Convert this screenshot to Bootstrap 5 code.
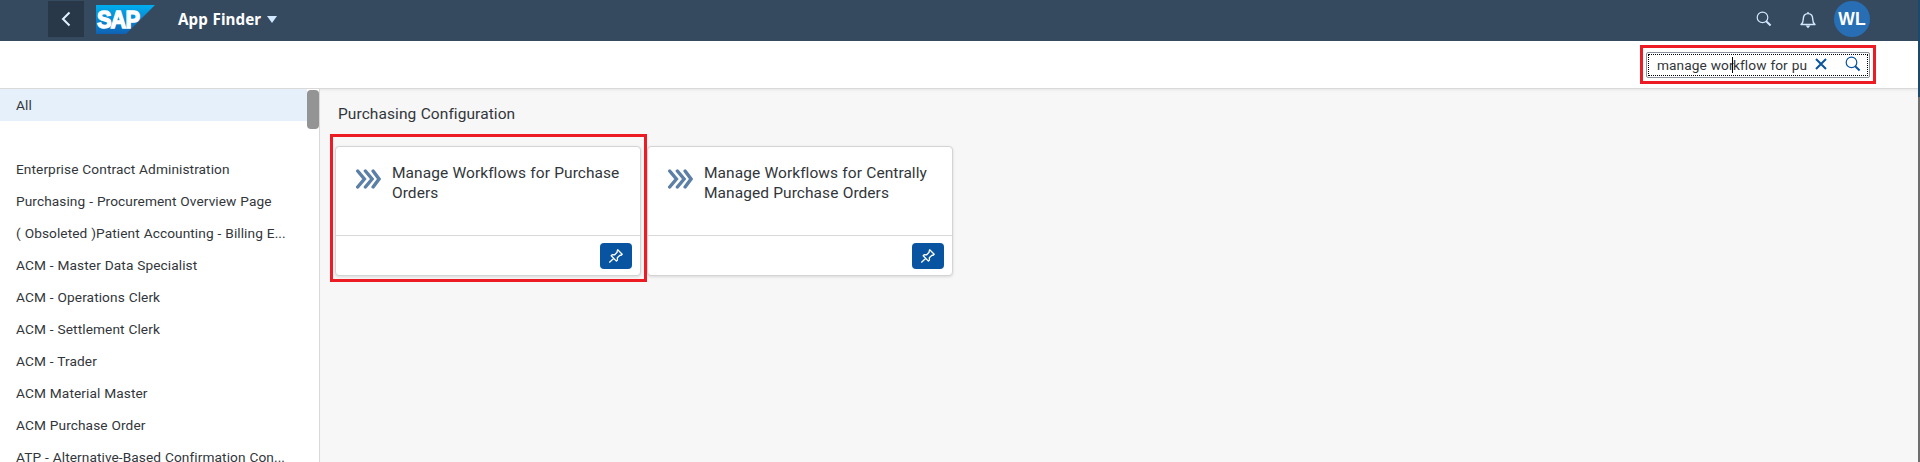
<!DOCTYPE html>
<html lang="en">
<head>
<meta charset="utf-8">
<meta name="viewport" content="width=device-width, initial-scale=1">
<title>App Finder</title>
<link href="https://cdn.jsdelivr.net/npm/bootstrap@5.3.0/dist/css/bootstrap.min.css" rel="stylesheet">
<style>
body{height:462px;font-family:Roboto,"Noto Sans",sans-serif;font-size:13.7px;letter-spacing:.08px;word-spacing:.4px;color:#32363a;background:#f7f7f7}
svg{display:block;flex:none}
.page{width:1918px}
.edge{width:2px;background:linear-gradient(#1c4a6b 0 97px,#6e6e6e 97px)}
.shell{height:41px;background:#354a5f;padding:0 48px}
.back-btn{width:36px;height:36px;margin:1px 12px 0 0;background:#283848;border:0;padding:0}
.shell-title{margin:-4px 0 0 22px;font:700 15.2px/20px "Noto Sans",sans-serif;letter-spacing:.1px;color:#fff}
.caret{border:5px solid transparent;border-top:7px solid #d1e8ff;border-bottom:0;margin:-3px 0 0 6px}
.right-tools svg{margin-top:11px}
.tool-lens{margin-right:28px;color:#d1e8ff}
.tool-bell{margin-right:18px}
.avatar{width:36px;height:36px;background:#286eb4;color:#fff;font:700 17.5px "Liberation Sans",sans-serif;margin-top:1px}
.toolbar-row{height:48px;border-bottom:1px solid #d9d9d9;padding:4px 42px 0 0}
.mark-box{border:3px solid #ed1c24}
.search-mark{width:236px;height:39px;padding:4px 3px}
.search-field{width:224px;height:26px;border:1px solid #89919a;border-radius:2px;padding:1px}
.search-inner{height:22px;border:1px dotted #000;padding-left:8px;white-space:nowrap}
.q1{width:75px}
.q2{width:72px}
.cursor{width:1px;height:16px;background:#000}
.clear-x{margin:-3px 0 0 10px}
.go{margin:-2px 0 0 18px;color:#0854a0}
.side{width:320px;border-right:1px solid #d9d9d9}
.side .list-group-item{height:32px;padding:0 16px;border:0;line-height:32px;color:#32363a;background:none;white-space:nowrap}
.side .picked{background:#e5f0fa;width:307px}
.side .spacer{height:32px}
.thumb{width:12px;height:39px;background:#949494;border-radius:4px;right:0;top:1px}
.content{box-shadow:inset 0 3px 3px -2px #e6e6e6}
.group-title{font-size:15.5px;letter-spacing:.08px;line-height:20px;padding:15px 0 0 18px}
.tiles{padding:10px 0 0 10px}
.tiles>*+*{margin-left:-5px}
.tile-wrap{padding:9px 3px 4px 2px;width:317px;height:148px;border-color:transparent}
.tile-wrap.marked{border-color:#ed1c24}
.tile{width:306px;height:130px;border:1px solid #d3d4d5;border-radius:4px;box-shadow:0 1px 3px rgba(0,0,0,.12)}
.tile-top{height:88px;padding:16px 16px 0 20px}
.tile-text{font-size:15.5px;letter-spacing:.05px;line-height:20px;margin-left:11px;white-space:nowrap}
.tile-foot{height:40px;border-top:1px solid #d9d9d9;padding:0 8px}
.pin-btn{width:32px;height:26px;background:#0854a0;border-radius:4px;padding:0;border:0}
.chev{margin-top:6px}
</style>
</head>
<body class="d-flex overflow-hidden">
<svg width="0" height="0" class="position-absolute" aria-hidden="true">
  <symbol id="chev" viewBox="0 0 25 20"><path d="M1.700 2l6.700 8-6.700 8M9.400 2l6.700 8-6.700 8M17.100 2l5.900 8-5.900 8" fill="none" stroke="#5b7fa6" stroke-width="3.400" stroke-linecap="round"/></symbol>
  <symbol id="pin" viewBox="0 0 16 16"><path d="M9.700 1.800l4.500 4.400-1.100 1.100-1.100-.1-2.700 2.500.2 2.400-1.100 1-5.200-5.300 1-1.100 2.500.1 2.400-2.600.1-1.300zM5.800 10.200L1.300 14.500" fill="none" stroke="#fff" stroke-width="1.300" stroke-linejoin="round"/></symbol>
  <symbol id="lens" viewBox="0 0 16 16"><circle cx="6.500" cy="6.400" r="5.300" fill="none" stroke="currentColor" stroke-width="1.200"/><path d="M10.200 10.300l4.400 4.200" stroke="currentColor" stroke-width="2"/></symbol>
  <linearGradient id="sapfill" x2="0" y2="1"><stop stop-color="#00aeef"/><stop offset="1" stop-color="#0f62b4"/></linearGradient>
</svg>
<div class="page d-flex flex-column flex-shrink-0">
  <header class="shell d-flex align-items-start flex-shrink-0">
    <button class="back-btn d-flex align-items-center justify-content-center" aria-label="Back"><svg width="36" height="36"><path d="M21.500 11.500L15 18l6.500 6.500" fill="none" stroke="#e3f0ff" stroke-width="2"/></svg></button>
    <svg width="60" height="41" aria-label="SAP"><path d="M0 5h59L30 34H0z" fill="url(#sapfill)"/><text x="1" y="28" textLength="42" lengthAdjust="spacingAndGlyphs" font-family="Liberation Sans, sans-serif" font-weight="700" font-size="23.500" letter-spacing="-1" fill="#fff" stroke="#fff" stroke-width="1.400">SAP</text></svg>
    <div class="d-flex align-items-center align-self-center"><span class="shell-title">App Finder</span><span class="caret"></span></div>
    <div class="d-flex ms-auto right-tools">
      <svg width="16" height="16" class="tool-lens"><use href="#lens"/></svg>
      <svg width="16" height="18" viewBox="0 0 16 18" class="tool-bell"><path d="M1 13.500c2-1.500 2.300-3 2.300-5.500C3.300 4.500 5 2.600 8 2.600S12.700 4.500 12.700 8c0 2.500.3 4 2.300 5.500zM8 2.600V1" fill="none" stroke="#d1e8ff" stroke-width="1.400" stroke-linejoin="round"/><path d="M5.500 14.500h5L8 17.200z" fill="#d1e8ff"/></svg>
      <div class="avatar rounded-circle d-flex align-items-center justify-content-center">WL</div>
    </div>
  </header>
  <div class="toolbar-row bg-white d-flex justify-content-end flex-shrink-0">
    <div class="mark-box search-mark"><div class="search-field"><div class="search-inner d-flex align-items-center">
      <span class="q1">manage wor</span><span class="cursor"></span><span class="q2">kflow for pu</span>
      <svg width="12" height="12" class="clear-x"><path d="M1 1l10 10M11 1L1 11" stroke="#0854a0" stroke-width="2"/></svg>
      <svg width="16" height="16" class="go"><use href="#lens"/></svg>
    </div></div></div>
  </div>
  <div class="d-flex flex-grow-1">
    <nav class="side bg-white position-relative flex-shrink-0">
      <div class="list-group list-group-flush">
        <a class="list-group-item picked">All</a>
        <div class="spacer"></div>
        <a class="list-group-item">Enterprise Contract Administration</a>
        <a class="list-group-item">Purchasing - Procurement Overview Page</a>
        <a class="list-group-item">( Obsoleted )Patient Accounting - Billing E...</a>
        <a class="list-group-item">ACM - Master Data Specialist</a>
        <a class="list-group-item">ACM - Operations Clerk</a>
        <a class="list-group-item">ACM - Settlement Clerk</a>
        <a class="list-group-item">ACM - Trader</a>
        <a class="list-group-item">ACM Material Master</a>
        <a class="list-group-item">ACM Purchase Order</a>
        <a class="list-group-item">ATP - Alternative-Based Confirmation Con...</a>
      </div>
      <div class="thumb position-absolute"></div>
    </nav>
    <main class="content flex-grow-1">
      <div class="group-title">Purchasing Configuration</div>
      <div class="d-flex tiles">
        <div class="mark-box tile-wrap marked position-relative z-1"><div class="tile bg-white">
          <div class="tile-top d-flex"><svg class="chev" width="25" height="20"><use href="#chev"/></svg><div class="tile-text">Manage Workflows for Purchase<br>Orders</div></div>
          <div class="tile-foot d-flex align-items-center justify-content-end"><button class="pin-btn d-flex align-items-center justify-content-center" aria-label="Pin"><svg width="16" height="16"><use href="#pin"/></svg></button></div>
        </div></div>
        <div class="mark-box tile-wrap"><div class="tile bg-white">
          <div class="tile-top d-flex"><svg class="chev" width="25" height="20"><use href="#chev"/></svg><div class="tile-text">Manage Workflows for Centrally<br>Managed Purchase Orders</div></div>
          <div class="tile-foot d-flex align-items-center justify-content-end"><button class="pin-btn d-flex align-items-center justify-content-center" aria-label="Pin"><svg width="16" height="16"><use href="#pin"/></svg></button></div>
        </div></div>
      </div>
    </main>
  </div>
</div>
<div class="edge flex-shrink-0"></div>
<script src="https://cdn.jsdelivr.net/npm/bootstrap@5.3.0/dist/js/bootstrap.bundle.min.js"></script>
</body>
</html>
